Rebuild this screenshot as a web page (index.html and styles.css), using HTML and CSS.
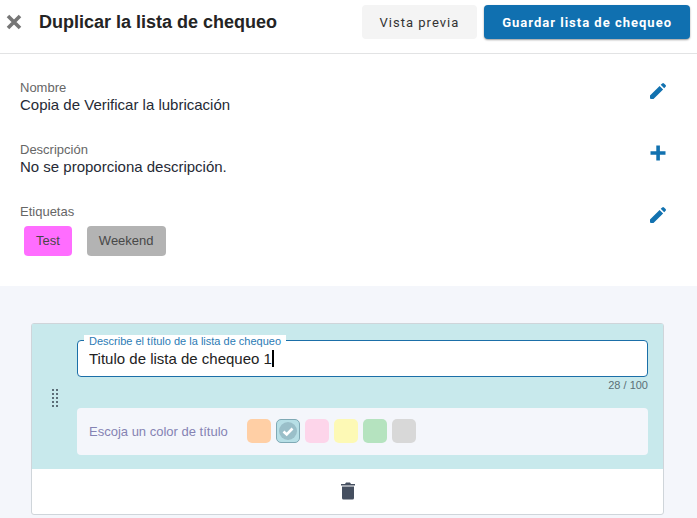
FILE: index.html
```html
<!DOCTYPE html>
<html lang="es">
<head>
<meta charset="utf-8">
<meta name="viewport" content="width=device-width, initial-scale=1">
<title>Duplicar la lista de chequeo</title>
<link rel="stylesheet" href="styles.css">
</head>
<body>
<header class="topbar">
  <button class="icon-button" type="button" aria-label="Cerrar">
    <svg width="16" height="16" viewBox="0 0 16 16"><path d="M2 2 14 14M14 2 2 14" fill="none" stroke="#767676" stroke-width="3.600"/></svg>
  </button>
  <h1 class="title">Duplicar la lista de chequeo</h1>
  <button class="button" type="button">Vista previa</button>
  <button class="button button-primary" type="button">Guardar lista de chequeo</button>
</header>

<section class="details">
  <div class="row">
    <div>
      <div class="row-label">Nombre</div>
      <div class="row-value">Copia de Verificar la lubricación</div>
    </div>
    <button class="icon-button" type="button" aria-label="Editar nombre">
      <svg width="18" height="18" viewBox="0 0 18 18" fill="#1272b0"><path d="M1 13.500 10.600 3.900 14.100 7.400 4.500 17H2a1 1 0 0 1-1-1zM11.700 2.800 13.200 1.400a1.300 1.300 0 0 1 1.800 0L16.600 3a1.300 1.300 0 0 1 0 1.800L15.200 6.300z"/></svg>
    </button>
  </div>
  <div class="row">
    <div>
      <div class="row-label">Descripción</div>
      <div class="row-value">No se proporciona descripción.</div>
    </div>
    <button class="icon-button" type="button" aria-label="Agregar descripción">
      <svg width="18" height="18" viewBox="0 0 18 18" fill="#1272b0"><path d="M7.300 1.500h3.600v5.700h5.600v3.600h-5.600v5.700H7.300v-5.700H1.500V7.200h5.800z"/></svg>
    </button>
  </div>
  <div class="row">
    <div>
      <div class="row-label">Etiquetas</div>
      <div class="tags">
        <span class="tag tag-pink">Test</span>
        <span class="tag tag-gray">Weekend</span>
      </div>
    </div>
    <button class="icon-button" type="button" aria-label="Editar etiquetas">
      <svg width="18" height="18" viewBox="0 0 18 18" fill="#1272b0"><path d="M1 13.500 10.600 3.900 14.100 7.400 4.500 17H2a1 1 0 0 1-1-1zM11.700 2.800 13.200 1.400a1.300 1.300 0 0 1 1.800 0L16.600 3a1.300 1.300 0 0 1 0 1.800L15.200 6.300z"/></svg>
    </button>
  </div>
</section>

<main class="canvas">
  <article class="card">
    <div class="card-head">
      <svg class="handle" width="8" height="18" viewBox="0 0 8 18" fill="#5c6e78"><path d="M1 0h2v2H1zM5 0h2v2H5zM1 4h2v2H1zM5 4h2v2H5zM1 8h2v2H1zM5 8h2v2H5zM1 12h2v2H1zM5 12h2v2H5zM1 16h2v2H1zM5 16h2v2H5z"/></svg>
      <div class="card-fields">
        <div class="field">
          <label class="field-label" for="list-title">Describe el título de la lista de chequeo</label>
          <input class="field-input" id="list-title" type="text" maxlength="100" value="Titulo de lista de chequeo 1">
          <span class="caret"></span>
        </div>
        <div class="counter">28 / 100</div>
        <fieldset class="palette" aria-labelledby="palette-label">
          <span class="palette-label" id="palette-label">Escoja un color de título</span>
          <div class="swatches">
            <input class="swatch orange" type="radio" name="color" aria-label="Naranja">
            <span class="picked">
              <input class="swatch teal" type="radio" name="color" aria-label="Turquesa" checked>
              <svg class="check" width="24" height="24" viewBox="0 0 24 24"><circle cx="12" cy="12" r="9" fill="#9abfc9"/><path d="M7.500 12.500 10.700 15.500 16.500 9.500" fill="none" stroke="#fff" stroke-width="2.600"/></svg>
            </span>
            <input class="swatch pink" type="radio" name="color" aria-label="Rosa">
            <input class="swatch yellow" type="radio" name="color" aria-label="Amarillo">
            <input class="swatch green" type="radio" name="color" aria-label="Verde">
            <input class="swatch gray" type="radio" name="color" aria-label="Gris">
          </div>
        </fieldset>
      </div>
    </div>
    <div class="card-foot">
      <button class="icon-button" type="button" aria-label="Eliminar">
        <svg width="14" height="18" viewBox="0 0 14 18" fill="#454f60"><path d="M0 2h4l1-1.500h4L10 2h4v1.500H0zM1 4.500h12V16a1.500 1.500 0 0 1-1.500 1.500h-9A1.500 1.500 0 0 1 1 16z"/></svg>
      </button>
    </div>
  </article>
</main>
</body>
</html>
```
FILE: styles.css
```css
* {
  box-sizing: border-box;
}

body {
  margin: 0;
  min-height: 100vh;
  background: #f4f6fb;
  color: #262a35;
  font-family: "Liberation Sans", Arial, sans-serif;
  font-size: 13px;
}

button,
input {
  font: inherit;
}

.topbar {
  display: flex;
  align-items: center;
  padding: 5px 7px 14px 3px;
  border-bottom: 1px solid #e2e3e4;
  background: #fff;
}

.icon-button {
  display: flex;
  align-items: center;
  justify-content: center;
  width: 22px;
  height: 22px;
  padding: 0;
  border: 0;
  background: none;
}

.title {
  flex: 1;
  margin: 0 0 0 14px;
  color: #242424;
  font-size: 18px;
  line-height: 24px;
}

.button {
  height: 34px;
  padding: 0 18px;
  border: 0;
  border-radius: 4px;
  background: #f4f4f4;
  color: #333;
  font-family: Roboto, sans-serif;
  font-size: 13px;
  letter-spacing: 1px;
  white-space: nowrap;
}

.button-primary {
  margin-left: 7px;
  background: #1070b0;
  box-shadow: 0 1px 2px rgba(0, 0, 0, 0.4);
  color: #fff;
  font-weight: bold;
}

.details {
  display: grid;
  gap: 28px;
  padding: 26px 28px 30px 20px;
  background: #fff;
}

.row {
  display: flex;
  align-items: flex-start;
  justify-content: space-between;
}

.row-label {
  color: #666;
  line-height: 16px;
}

.row-value {
  font-size: 15px;
  line-height: 18px;
}

.tags {
  display: flex;
  gap: 15px;
  padding: 6px 4px 0;
}

.tag {
  padding: 0 12px;
  border-radius: 4px;
  color: #484848;
  line-height: 30px;
}

.tag-pink {
  background: #ff6dff;
}

.tag-gray {
  background: #b3b3b3;
}

.canvas {
  padding: 37px 33px 3px 31px;
}

.card {
  border: 1px solid #cfd5da;
  border-radius: 3px;
  background: #fff;
}

.card-head {
  display: flex;
  align-items: center;
  gap: 18px;
  padding: 16px 15px 14px 19px;
  background: #c8e9ec;
}

.card-fields {
  flex: 1;
}

.field {
  position: relative;
  display: flex;
  align-items: center;
  height: 37px;
  padding: 0 11px;
  border: 1px solid #1b6fa8;
  border-radius: 4px;
  background: #fff;
}

.field-label {
  position: absolute;
  top: -6px;
  left: 6px;
  padding: 0 5px;
  background: #fff;
  color: #2b7bb5;
  font-size: 11px;
  line-height: 12px;
}

.field-input {
  field-sizing: content;
  padding: 0;
  border: 0;
  outline: 0;
  background: none;
  color: #222;
  font-size: 15px;
}

.caret {
  width: 2px;
  height: 17px;
  background: #000;
}

.counter {
  color: #5b6f76;
  font-size: 11px;
  line-height: 17px;
  text-align: right;
}

.palette {
  display: flex;
  align-items: center;
  gap: 19px;
  min-width: 0;
  margin: 14px 0 0;
  padding: 11px 12px 12px;
  border: 0;
  border-radius: 4px;
  background: #f4f6fb;
}

.palette-label {
  color: #8583b3;
}

.swatches {
  display: flex;
  gap: 5px;
}

.swatch {
  display: block;
  width: 24px;
  height: 24px;
  margin: 0;
  border-radius: 5px;
  appearance: none;
}

.picked {
  position: relative;
}

.check {
  position: absolute;
  inset: 0;
  pointer-events: none;
}

.orange {
  background: #ffcfa5;
}

.teal {
  border: 1px solid #7fa9b5;
  background: #b7dfe6;
}

.pink {
  background: #fdd5ea;
}

.yellow {
  background: #fdf9b5;
}

.green {
  background: #b5e3bf;
}

.gray {
  background: #d8d8d8;
}

.card-foot {
  display: flex;
  justify-content: center;
  padding: 11px 0 12px;
}
```
